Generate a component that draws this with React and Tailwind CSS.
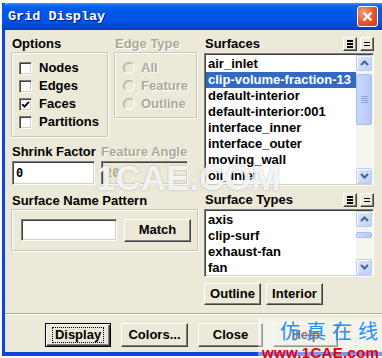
import React from "react";

const ui = "font-['Liberation_Sans',Arial,sans-serif] font-bold text-[13px] leading-[16px] text-black";
const grey = "text-[#ACA899] [text-shadow:1px_1px_0_#fff]";
const raised = "border border-t-white border-l-white border-r-[#404040] border-b-[#404040] shadow-[inset_-1px_-1px_0_#808080]";
const sunken = "border border-t-[#808080] border-l-[#808080] border-r-white border-b-white shadow-[inset_1px_1px_0_#404040,inset_-1px_-1px_0_#D4D0C8]";
const etched = "border border-[#C9C6B6] shadow-[inset_1px_1px_0_#fff,1px_1px_0_#fff]";

const Check = ({ label, checked }) => (
    <div className="flex items-center h-[18px]">
        <span className={`w-[13px] h-[13px] bg-white flex items-center justify-center ${sunken}`}>
            {checked && (
                <svg width="9" height="9" viewBox="0 0 9 9">
                    <path d="M1.2 4.2 L3.5 6.6 L7.9 1.8" stroke="#000" strokeWidth="1.8" fill="none" />
                </svg>
            )}
        </span>
        <span className="ml-[7px]">{label}</span>
    </div>
);

const Radio = ({ label }) => (
    <div className="flex items-center h-[18px]">
        <span className="w-[12px] h-[12px] rounded-full bg-[#ECE9D8] border border-t-[#ACA899] border-l-[#ACA899] border-r-white border-b-white shadow-[inset_1px_1px_0_#D3D0C2]" />
        <span className={`ml-[6px] ${grey}`}>{label}</span>
    </div>
);

const Btn = ({ children, className = "" }) => (
    <div className={`flex items-center justify-center bg-[#ECE9D8] ${raised} ${className}`}>{children}</div>
);

const MiniBtn = ({ bars }) => (
    <div className={`w-[14px] h-[14px] flex items-center justify-center bg-[#ECE9D8] ${raised}`}>
        {bars === 3 ? (
            <svg width="6" height="8" viewBox="0 0 6 8">
                <rect x="0" y="0" width="6" height="2" fill="#000" />
                <rect x="0" y="3" width="6" height="2" fill="#000" />
                <rect x="0" y="6" width="6" height="2" fill="#000" />
            </svg>
        ) : (
            <svg width="6" height="5" viewBox="0 0 6 5">
                <rect x="0" y="0" width="6" height="1" fill="#000" />
                <rect x="0" y="3" width="6" height="1" fill="#000" />
            </svg>
        )}
    </div>
);

const Arrow = ({ up }) => (
    <div className="h-[16px] rounded-[2px] border border-[#B8CBF7] bg-[linear-gradient(135deg,#DCE6FD,#BFD1FA)] shadow-[inset_1px_1px_0_#fff] flex items-center justify-center">
        <svg width="9" height="6" viewBox="0 0 9 6">
            <path d={up ? "M1 5 L4.5 1.5 L8 5" : "M1 1 L4.5 4.5 L8 1"} stroke="#4D6185" strokeWidth="2" fill="none" />
        </svg>
    </div>
);

const Scroll = ({ thumbTop, thumbH }) => (
    <div className="w-[17px] flex flex-col bg-[#F5F4EF] pr-[1px]">
        <Arrow up />
        <div className="flex-1 flex flex-col">
            <div
                className="rounded-[2px] border border-[#A9BEF2] bg-[linear-gradient(90deg,#C9D8FC,#B6CAF8)] flex flex-col items-center justify-center gap-[1px]"
                style={{ marginTop: thumbTop, height: thumbH }}
            >
                {thumbH > 20 &&
                    [0, 1, 2, 3].map((i) => <span key={i} className="block w-[7px] h-[1px] bg-[#8FA8E6]" />)}
            </div>
        </div>
        <Arrow />
    </div>
);

const ListBox = ({ items, selected, height, thumbTop, thumbH }) => (
    <div className={`bg-white flex ${sunken}`} style={{ height }}>
        <div className="flex-1 pt-[2px] pl-[1px] overflow-hidden">
            {items.map((t) => (
                <div
                    key={t}
                    className={`h-[16px] pl-[2px] whitespace-nowrap overflow-hidden ${t === selected ? "bg-[#316AC5] text-white" : ""}`}
                >
                    {t}
                </div>
            ))}
        </div>
        <div className="flex py-[1px]">
            <Scroll thumbTop={thumbTop} thumbH={thumbH} />
        </div>
    </div>
);

const surfaces = [
    "air_inlet",
    "clip-volume-fraction-13",
    "default-interior",
    "default-interior:001",
    "interface_inner",
    "interface_outer",
    "moving_wall",
    "oil_inlet",
];

const types = ["axis", "clip-surf", "exhaust-fan", "fan"];

export default function App() {
    return (
        <div className={`relative w-[382px] h-[358px] overflow-hidden bg-white pt-[3px] pl-[2px] ${ui}`}>
            <div className="flex flex-col h-[353px] border-l-[3px] border-b-[4px] border-[#0B45DE]">
                {/* title bar */}
                <div className="h-[27px] flex items-center justify-between pl-[3px] pr-[4px] bg-[linear-gradient(to_bottom,#3A93FF_0px,#0A64F0_3px,#0058E6_8px,#0054E3_18px,#0046D3_24px,#003CC4_27px)] rounded-tl-[6px] -ml-[3px]">
                    <span className="ml-[3px] font-['Liberation_Mono','Courier_New',monospace] font-bold text-[13.5px] text-white [text-shadow:1px_1px_0_#0A1883]">
                        Grid Display
                    </span>
                    <div className="w-[21px] h-[21px] rounded-[3px] border border-white bg-[radial-gradient(circle_at_30%_30%,#F3A183,#E0552F_55%,#C83C1B)] flex items-center justify-center">
                        <svg width="11" height="11" viewBox="0 0 11 11">
                            <path d="M1.5 1.5 L9.5 9.5 M9.5 1.5 L1.5 9.5" stroke="#fff" strokeWidth="2.2" />
                        </svg>
                    </div>
                </div>

                {/* body */}
                <div className="h-[322px] bg-[#ECE9D8] flex flex-col">
                    <div className="h-[283px] flex gap-[6px] pt-[6px] pl-[6px]">
                        {/* left column */}
                        <div className="w-[187px] flex flex-col">
                            <div className="flex gap-[6px]">
                                <div className="w-[97px]">
                                    <div className="pl-[1px] h-[16px]">Options</div>
                                    <div className={`h-[85px] pt-[6px] pl-[7px] ${etched}`}>
                                        <Check label="Nodes" />
                                        <Check label="Edges" />
                                        <Check label="Faces" checked />
                                        <Check label="Partitions" />
                                    </div>
                                </div>
                                <div className="w-[83px]">
                                    <div className={`pl-[1px] h-[16px] ${grey}`}>Edge Type</div>
                                    <div className={`h-[66px] pt-[6px] pl-[8px] ${etched}`}>
                                        <Radio label="All" />
                                        <Radio label="Feature" />
                                        <Radio label="Outline" />
                                    </div>
                                </div>
                            </div>

                            <div className="flex gap-[6px] mt-[7px] ml-[1px]">
                                <div className="w-[83px]">
                                    <div className="h-[16px] whitespace-nowrap">Shrink Factor</div>
                                    <div className={`mt-[1px] h-[24px] bg-white pl-[3px] flex items-center font-['DejaVu_Sans_Mono',monospace] text-[12px] ${sunken}`}>
                                        0
                                    </div>
                                </div>
                                <div className="w-[87px]">
                                    <div className={`h-[16px] whitespace-nowrap ${grey}`}>Feature Angle</div>
                                    <div className={`mt-[1px] h-[24px] bg-[#ECE9D8] pl-[3px] flex items-center font-['DejaVu_Sans_Mono',monospace] text-[12px] text-[#ACA899] ${sunken}`}>
                                        20
                                    </div>
                                </div>
                            </div>

                            <div className="mt-[8px] pl-[1px] h-[16px]">Surface Name Pattern</div>
                            <div className={`h-[42px] flex items-center pl-[9px] gap-[7px] ${etched}`}>
                                <div className={`w-[96px] h-[22px] bg-white ${sunken}`} />
                                <Btn className="w-[67px] h-[23px]">Match</Btn>
                            </div>
                        </div>

                        {/* right column */}
                        <div className="w-[170px] flex flex-col">
                            <div className="h-[16px] flex justify-between pl-[1px]">
                                <span>Surfaces</span>
                                <div className="flex gap-[3px] self-end mb-[1px]">
                                    <MiniBtn bars={3} />
                                    <MiniBtn bars={2} />
                                </div>
                            </div>
                            <div className="mt-[1px]">
                                <ListBox items={surfaces} selected="clip-volume-fraction-13" height={133} thumbTop={3} thumbH={51} />
                            </div>

                            <div className="mt-[6px] h-[16px] flex justify-between pl-[1px]">
                                <span>Surface Types</span>
                                <div className="flex gap-[3px] self-end mb-[1px]">
                                    <MiniBtn bars={3} />
                                    <MiniBtn bars={2} />
                                </div>
                            </div>
                            <div className="mt-[1px]">
                                <ListBox items={types} height={68} thumbTop={5} thumbH={6} />
                            </div>

                            <div className="mt-[6px] flex gap-[5px]">
                                <Btn className="w-[57px] h-[22px]">Outline</Btn>
                                <Btn className="w-[57px] h-[22px]">Interior</Btn>
                            </div>
                        </div>
                    </div>

                    {/* separator */}
                    <div className="h-[2px] border-t border-t-[#ACA899] border-b border-b-white" />

                    {/* bottom buttons */}
                    <div className="mt-[8px] pl-[40px] flex gap-[10px]">
                        <div className="w-[66px] h-[24px] flex items-center justify-center bg-[#ECE9D8] border border-black shadow-[inset_1px_1px_0_#fff,inset_-1px_-1px_0_#404040,inset_-2px_-2px_0_#808080]">
                            <span className="border border-dotted border-black px-[2px] leading-[14px]">Display</span>
                        </div>
                        <Btn className="w-[67px] h-[24px]">Colors...</Btn>
                        <Btn className="w-[65px] h-[24px]">Close</Btn>
                        <Btn className="w-[65px] h-[24px]">Help</Btn>
                    </div>
                </div>
            </div>

            {/* watermark */}
            <div className="absolute left-[96px] top-[160px] whitespace-nowrap font-['Liberation_Sans',Arial,sans-serif] font-bold text-[35px] leading-none text-white/85 [text-shadow:0_0_2px_rgba(110,110,110,0.55)]">
                1CAE.COM
            </div>
            <div className="absolute left-[258px] top-[318px] w-[124px] h-[40px] bg-white/45" />
            <div className="absolute left-[280px] top-[321px] whitespace-nowrap font-['Noto_Sans_CJK_SC',sans-serif] font-normal text-[20px] leading-none tracking-[6px] text-[#1E8FFF]">
                仿真在线
            </div>
            <div className="absolute left-[262px] top-[345px] whitespace-nowrap font-['Liberation_Sans',Arial,sans-serif] font-bold text-[15px] leading-none tracking-[0.3px] text-[#E8000B]">
                www.1CAE.com
            </div>
        </div>
    );
}
